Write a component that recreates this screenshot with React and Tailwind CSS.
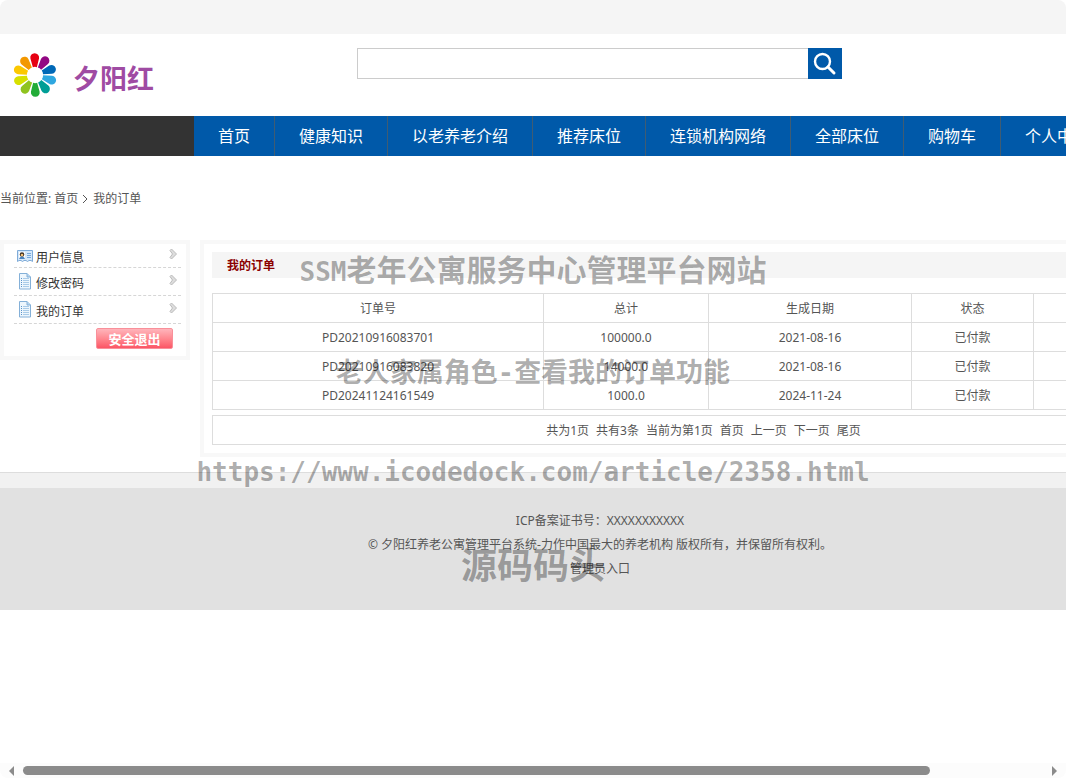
const navItems = ['首页', '健康知识', '以老养老介绍', '推荐床位', '连锁机构网络', '全部床位', '购物车', '个人中心']

const orders = [
  { no: 'PD20210916083701', total: '100000.0', date: '2021-08-16', status: '已付款' },
  { no: 'PD20210916083820', total: '14000.0', date: '2021-08-16', status: '已付款' },
  { no: 'PD20241124161549', total: '1000.0', date: '2024-11-24', status: '已付款' }
]

const petals = ['#e60012', '#920783', '#0068b7', '#2ea7e0', '#009e96', '#22ac38', '#8fc31f', '#d7e000', '#fcc800', '#f39800']

function Logo() {
  return (
    <a href="#" className="flex items-start gap-4">
      <svg width="44" height="44" viewBox="-22 -22 44 44">
        {petals.map((color, i) => (
          <path
            key={color}
            d="M-2 -7.800 L-4.300 -16.500 A4.400 4.400 0 1 1 4.300 -16.500 L2 -7.800 Q0 -8.500 -2 -7.800 Z"
            fill={color}
            transform={`rotate(${i * 36 - 1})`}
          />
        ))}
      </svg>
      <span className="pt-2.5 text-[27px] leading-8 font-bold text-[#9f4ba3]">夕阳红</span>
    </a>
  )
}

function UserIcon() {
  return (
    <svg width="16" height="14" viewBox="0 0 16 14">
      <path d="M.5 1.500h15v11l-1.500-1h-2l-1.500 1-1.500-1h-2l-1.500 1-1.500-1h-2l-1.500 1z" fill="#d5e8fa" stroke="#7fabd8" />
      <rect x="2" y="3" width="6" height="7" fill="#fff" />
      <circle cx="5" cy="5.500" r="2.300" fill="#3c2f25" />
      <circle cx="5" cy="6" r="1.300" fill="#f1be72" />
      <path d="M2 10q.5-2.500 3-2.500t3 2.500z" fill="#4b84bf" />
      <path d="M10 4.500h4M10 6.500h4M10 8.500h4" stroke="#76a9dc" />
    </svg>
  )
}

function DocIcon() {
  return (
    <svg width="16" height="17" viewBox="0 0 16 17">
      <path d="M2.500 .5h7.500l3.500 3.500v12h-11z" fill="#edf6fd" stroke="#84b0d8" />
      <path d="M10 .5v3.500h3.500" fill="#b6d6f1" stroke="#84b0d8" />
      <path d="M4 5.500h1M4 7.500h1M4 9.500h1M4 11.500h1M4 13.500h1" stroke="#5a93ca" />
      <path d="M6 5.500h6M6 7.500h6M6 9.500h6M6 11.500h6M6 13.500h6" stroke="#a9cbe8" />
    </svg>
  )
}

function Arrow() {
  return (
    <svg width="9" height="12" viewBox="0 0 9 12" className="mb-1">
      <path d="M2.500 1l5 5-5 5-1.500-1.500 2.500-3.500-2.500-3.500z" fill="#ddd" stroke="#bbb" />
    </svg>
  )
}

function Sidebar() {
  const menu = [
    { name: '用户信息', icon: UserIcon },
    { name: '修改密码', icon: DocIcon },
    { name: '我的订单', icon: DocIcon }
  ]

  return (
    <aside className="h-[120px] w-[190px] shrink-0 border-4 border-[#f8f8f8] pr-[5px] pl-2.5">
      <ul>
        {menu.map((item) => {
          const Icon = item.icon
          return (
            <li key={item.name} className="h-7 border-b border-dashed border-[#d6d6d6] first:h-6">
              <a href="#" className="flex h-full items-center px-[3px] text-[#333]">
                <Icon />
                <span className="ml-[3px] flex-1 pt-1">{item.name}</span>
                <Arrow />
              </a>
            </li>
          )
        })}
      </ul>
      <div className="flex justify-end pt-1 pr-2">
        <button className="h-[21px] w-[77px] rounded-xs border border-[#f9909a] bg-linear-to-b from-[#ffb4bb] to-[#fb5566] text-[13px] leading-4 font-bold text-white">
          安全退出
        </button>
      </div>
    </aside>
  )
}

function Orders() {
  return (
    <main className="min-w-0 flex-1 border-4 border-[#f8f8f8] p-2">
      <h1 className="h-[26px] bg-[#f5f5f5] pl-[15px] leading-7 font-bold text-[#8b0000]">我的订单</h1>
      <table className="mt-[15px] w-full table-fixed border-collapse text-center">
        <thead>
          <tr className="h-[29px]">
            <th className="w-[331px] border border-[#ddd] pt-0.5 font-normal">订单号</th>
            <th className="w-[165px] border border-[#ddd] pt-0.5 font-normal">总计</th>
            <th className="w-[203px] border border-[#ddd] pt-0.5 font-normal">生成日期</th>
            <th className="w-[122px] border border-[#ddd] pt-0.5 font-normal">状态</th>
            <th className="border border-[#ddd]"></th>
          </tr>
        </thead>
        <tbody>
          {orders.map((order) => (
            <tr key={order.no} className="h-[29px]">
              <td className="border border-[#ddd] pt-0.5">{order.no}</td>
              <td className="border border-[#ddd] pt-0.5">{order.total}</td>
              <td className="border border-[#ddd] pt-0.5">{order.date}</td>
              <td className="border border-[#ddd] pt-0.5">{order.status}</td>
              <td className="border border-[#ddd]"></td>
            </tr>
          ))}
        </tbody>
      </table>
      <div className="mt-[5px] flex h-[30px] items-center justify-center gap-[7px] border border-[#ddd] pt-0.5 pl-[7px]">
        <span>共为1页</span>
        <span>共有3条</span>
        <span>当前为第1页</span>
        <a href="#">首页</a>
        <a href="#">上一页</a>
        <a href="#">下一页</a>
        <a href="#">尾页</a>
      </div>
    </main>
  )
}

// Semi-transparent text that floats over the page
function Watermark() {
  return (
    <div className="pointer-events-none absolute inset-0 text-center font-bold whitespace-nowrap text-black/32">
      <p className="absolute inset-x-0 top-[250px] text-[30px] leading-10">
        <span className="font-['DejaVu_Sans_Mono',monospace] text-[26px]">SSM</span>老年公寓服务中心管理平台网站
      </p>
      <p className="absolute inset-x-0 top-[352px] text-[27px] leading-10">
        老人家属角色<span className="font-['DejaVu_Sans_Mono',monospace]">-</span>查看我的订单功能
      </p>
      <p className="absolute inset-x-0 top-[452px] font-['DejaVu_Sans_Mono',monospace] text-[26px] leading-10">
        https://www.icodedock.com/article/2358.html
      </p>
      <p className="absolute inset-x-0 top-[546px] text-[36px] leading-10">源码码头</p>
    </div>
  )
}

function ScrollBar() {
  return (
    <div className="flex h-[15px] items-center bg-[#fcfcfc] px-[9px]">
      <svg width="5" height="10" viewBox="0 0 5 10">
        <path d="M5 0v10L0 5z" fill="#8b8b8b" />
      </svg>
      <div className="mx-[9px] flex-1">
        <div className="h-[9px] w-8/9 rounded-full bg-[#8b8b8b]" />
      </div>
      <svg width="5" height="10" viewBox="0 0 5 10">
        <path d="M0 0v10l5-5z" fill="#8b8b8b" />
      </svg>
    </div>
  )
}

export default function App() {
  return (
    <div className="relative flex min-h-screen flex-col overflow-hidden rounded-lg bg-white font-['Noto_Sans','Noto_Sans_CJK_SC',sans-serif] text-xs text-[#555]">
      <div className="flex-1 overflow-hidden">
        <div className="min-w-[1200px]">
          <div className="h-[34px] bg-[#f5f5f5]" />
          <header className="flex h-[82px] items-start">
            <div className="w-[357px] pt-[19px] pl-[13px]">
              <Logo />
            </div>
            <form className="mt-3.5 flex h-[31px]">
              <input type="text" aria-label="搜索" className="w-[451px] border border-r-0 border-[#ccc] px-2 outline-none" />
              <button type="button" aria-label="搜索" className="flex w-[34px] items-center justify-center bg-[#0059a9]">
                <svg width="24" height="24" viewBox="0 0 24 24" fill="none" stroke="#fff">
                  <circle cx="9.500" cy="9.500" r="7.500" strokeWidth="2.400" />
                  <path d="M15 15l6 6" strokeWidth="3" strokeLinecap="round" />
                </svg>
              </button>
            </form>
          </header>
          <nav className="flex h-10 bg-[#0059a9]">
            <div className="w-[194px] shrink-0 bg-[#333]" />
            {navItems.map((item) => (
              <a key={item} href="#" className="shrink-0 border-r border-[#3f5c73] px-6 text-base leading-10 text-white">
                {item}
              </a>
            ))}
          </nav>
          <div className="flex h-[84px] items-center pt-0.5">
            <span>当前位置:</span>
            <a href="#" className="ml-[3px]">首页</a>
            <svg width="6" height="10" viewBox="0 0 6 10" className="mr-[5px] ml-1" fill="none" stroke="#555">
              <path d="M1 1l4 4-4 4" />
            </svg>
            <span>我的订单</span>
          </div>
          <div className="flex items-start gap-2.5">
            <Sidebar />
            <Orders />
          </div>
          <footer className="mt-[15px] border-t border-[#ddd] bg-[#f1f1f1] pt-[15px]">
            <div className="h-[122px] bg-[#e1e1e1] pt-[21px] text-center leading-6">
              <p>ICP备案证书号：XXXXXXXXXXX</p>
              <p>© 夕阳红养老公寓管理平台系统-力作中国最大的养老机构 版权所有，并保留所有权利。</p>
              <p><a href="#">管理员入口</a></p>
            </div>
          </footer>
        </div>
      </div>
      <ScrollBar />
      <Watermark />
    </div>
  )
}
